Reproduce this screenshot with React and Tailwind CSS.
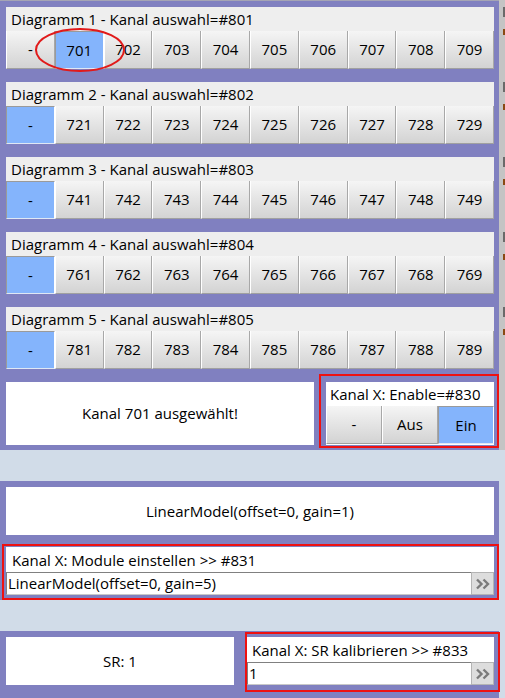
import React from 'react';

const groups = [
    { title: 'Diagramm 1 - Kanal auswahl=#801', start: 701, selected: 1 },
    { title: 'Diagramm 2 - Kanal auswahl=#802', start: 721, selected: 0 },
    { title: 'Diagramm 3 - Kanal auswahl=#803', start: 741, selected: 0 },
    { title: 'Diagramm 4 - Kanal auswahl=#804', start: 761, selected: 0 },
    { title: 'Diagramm 5 - Kanal auswahl=#805', start: 781, selected: 0 },
];

const SegButton = ({ label, active }) => (
    <button
        className={
            active
                ? 'h-full flex items-center justify-center text-[15px] text-black bg-[#84b4fc] border-l border-t border-[#9a9a9a] border-r border-r-white border-b border-b-[#dfe8f5]'
                : 'h-full flex items-center justify-center text-[15px] text-black bg-linear-to-b from-[#f5f5f5] to-[#d3d3d3] border-l border-l-white border-r border-r-[#a8a8a8] border-b border-b-[#a0a0a0]'
        }
    >
        {label}
    </button>
);

const Chevrons = () => (
    <svg width="16" height="12" viewBox="0 0 16 12" fill="none">
        <path d="M2 1.5 L6.5 6 L2 10.5" stroke="#7a7a7a" strokeWidth="2.4" />
        <path d="M8.5 1.5 L13 6 L8.5 10.5" stroke="#7a7a7a" strokeWidth="2.4" />
    </svg>
);

const InputRow = ({ value }) => (
    <div className="flex h-[23px]">
        <div className="flex-1 flex items-center bg-white border-t border-l border-[#808080] border-b border-b-[#c8c8c8] text-[15px] text-black leading-none pl-px">
            {value}
        </div>
        <div className="w-[23px] flex items-center justify-center bg-[#dddddd] border border-[#b4b4b4]">
            <Chevrons />
        </div>
    </div>
);

const DiagramGroup = ({ title, start, selected }) => {
    const labels = ['-', ...Array.from({ length: 9 }, (_, i) => String(start + i))];
    return (
        <div className="w-[488px]">
            <div className="h-[24px] bg-[#eeeeee] flex items-center pl-[5px] text-[15px] text-black">{title}</div>
            <div className="grid grid-cols-10 h-[38px]">
                {labels.map((l, i) => (
                    <SegButton key={l} label={l} active={i === selected} />
                ))}
            </div>
        </div>
    );
};

const App = () => {
    return (
        <div
            className="relative w-[505px] h-[698px] overflow-hidden bg-[#d1dce8] text-black"
            style={{ fontFamily: '"Open Sans", "Noto Sans", sans-serif' }}
        >
            {/* Top panel: channel selection */}
            <div className="flex h-[450px]">
                <div className="w-[499px] bg-[#8080c0] border-t border-[#a4a4b4] pt-[6px] pl-[6px] flex flex-col gap-[13px]">
                    {groups.map((g) => (
                        <DiagramGroup key={g.title} {...g} />
                    ))}
                    <div className="flex gap-[12px]">
                        <div className="w-[308px] h-[63px] bg-white flex items-center justify-center text-[15px]">
                            Kanal 701 ausgewählt!
                        </div>
                        <div className="relative w-[168px] h-[63px] bg-white flex flex-col">
                            <div className="h-[24px] flex items-center pl-[4px] text-[15px]">Kanal X: Enable=#830</div>
                            <div className="grid grid-cols-3 h-[38px]">
                                <SegButton label="-" />
                                <SegButton label="Aus" />
                                <SegButton label="Ein" active />
                            </div>
                            <div className="absolute -left-[7px] -top-[8px] w-[180px] h-[74px] border-2 border-[#ee1111] pointer-events-none" />
                        </div>
                    </div>
                </div>
                {/* edge of neighbouring window */}
                <div className="w-[6px] bg-[#c4c4c4] flex flex-col pt-[7px] gap-[12px]">
                    {groups.map((g) => (
                        <div key={g.start} className="flex flex-col gap-[12px] h-[63px] pl-[4px]">
                            <div className="w-[2px] h-[10px] bg-[#6a6a6a]" />
                            <div className="w-[2px] h-[6px] bg-[#8a4a14]" />
                        </div>
                    ))}
                </div>
            </div>

            <div className="h-[31px]" />

            {/* Module panel */}
            <div className="w-[499px] h-[119px] bg-[#8080c0] pt-[6px] pl-[6px] flex flex-col gap-[12px]">
                <div className="w-[488px] h-[48px] bg-white flex items-center justify-center text-[15px]">
                    LinearModel(offset=0, gain=1)
                </div>
                <div className="relative w-[488px] bg-white flex flex-col">
                    <div className="h-[25px] flex items-center pl-[6px] pt-[2px] text-[15px]">Kanal X: Module einstellen &gt;&gt; #831</div>
                    <InputRow value="LinearModel(offset=0, gain=5)" />
                    <div className="absolute -left-[4px] -top-[3px] w-[497px] h-[56px] border-2 border-[#ee1111] pointer-events-none" />
                </div>
            </div>

            <div className="h-[31px]" />

            {/* SR panel */}
            <div className="w-[499px] h-[80px] bg-[#8080c0] pt-[6px] pl-[6px] flex gap-[13px]">
                <div className="w-[228px] h-[48px] bg-white flex items-center justify-center text-[15px]">SR: 1</div>
                <div className="relative w-[247px] h-[48px] bg-white flex flex-col">
                    <div className="h-[25px] flex items-center pl-[5px] pt-[2px] text-[15px]">Kanal X: SR kalibrieren &gt;&gt; #833</div>
                    <InputRow value="1" />
                    <div className="absolute -left-[2px] -top-[5px] w-[255px] h-[60px] border-2 border-[#ee1111] pointer-events-none" />
                </div>
            </div>

            {/* annotation ellipse around the selected channel */}
            <svg className="absolute left-0 top-0 pointer-events-none" width="140" height="80">
                <ellipse cx="80" cy="50" rx="44" ry="21" fill="none" stroke="#e11a1a" strokeWidth="2" />
            </svg>
        </div>
    );
};

export default App;
